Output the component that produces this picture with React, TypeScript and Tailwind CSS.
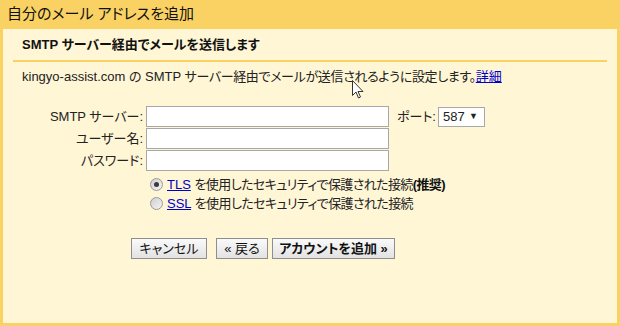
const font = "font-['Liberation_Sans','Noto_Sans_CJK_JP',sans-serif] [font-feature-settings:'palt']"

function Radio({ checked }: { checked?: boolean }) {
  return (
    <span className="flex h-[13px] w-[13px] items-center justify-center rounded-full border border-[#9a9a9a] bg-[linear-gradient(135deg,#cfcfcf,#f4f4f4)]">
      {checked && <span className="h-[5px] w-[5px] rounded-full bg-[#3a3a3a]" />}
    </span>
  )
}

function Button({ children, className = "" }: { children: React.ReactNode; className?: string }) {
  return (
    <button
      className={`flex h-[21px] items-center justify-center border border-[#8e8e8e] bg-[linear-gradient(180deg,#fafafa,#e2e2e2)] text-[13px] leading-none text-[#111] ${className}`}
    >
      {children}
    </button>
  )
}

export default function App() {
  return (
    <div className={`flex h-[326px] w-[620px] flex-col bg-[#fad163] text-[#222] ${font}`}>
      <div className="flex h-[29px] items-center pl-[7px] text-[15px] text-[#111]">自分のメール アドレスを追加</div>

      <div className="relative mx-[3px] mb-[3px] flex-1 bg-[#fff6d6]">
        <div className="mx-[10px] flex h-[33px] items-center border-b-2 border-[#fad163] pl-[9px] text-[13px] font-bold text-[#111]">
          SMTP サーバー経由でメールを送信します
        </div>

        <p className="mt-[7px] pl-[19px] text-[13px] leading-[16px]">
          kingyo-assist.com の SMTP <span className="tracking-[-0.35px]">サーバー経由でメールが送信されるように設定します。</span>
          <a className="text-[#0000cc] underline" href="#">詳細</a>
        </p>

        <div className="mt-[21px] grid grid-cols-[140px_auto] items-center gap-x-[3px] gap-y-[1px] text-[13px]">
          <label className="text-right">SMTP サーバー:</label>
          <div className="flex items-center">
            <input className="h-[21px] w-[243px] border border-[#a8a8a8] bg-white outline-none" />
            <span className="ml-[8px]">ポート:</span>
            <div className="ml-[2px] flex h-[20px] w-[47px] items-center justify-between border border-[#a8a8a8] bg-white pl-[4px] pr-[6px]">
              <span>587</span>
              <span className="text-[9px]">▼</span>
            </div>
          </div>
          <label className="text-right">ユーザー名:</label>
          <input className="h-[21px] w-[243px] border border-[#a8a8a8] bg-white outline-none" />
          <label className="text-right">パスワード:</label>
          <input className="h-[21px] w-[243px] border border-[#a8a8a8] bg-white outline-none" />
        </div>

        <div className="ml-[147px] mt-[4px] flex flex-col text-[13px]">
          <div className="flex h-[19px] items-center gap-[4px]">
            <Radio checked />
            <span>
              <a className="text-[#0000cc] underline" href="#">TLS</a>{" "}
              <span className="tracking-[-0.6px]">を使用したセキュリティで保護された接続</span>
              <b className="tracking-[-0.6px] text-[#111]">(推奨)</b>
            </span>
          </div>
          <div className="flex h-[19px] items-center gap-[4px]">
            <Radio />
            <span>
              <a className="text-[#0000cc] underline" href="#">SSL</a>{" "}
              <span className="tracking-[-0.6px]">を使用したセキュリティで保護された接続</span>
            </span>
          </div>
        </div>

        <div className="ml-[128px] mt-[25px] flex">
          <Button className="w-[76px]">キャンセル</Button>
          <Button className="ml-[9px] w-[52px]">« 戻る</Button>
          <Button className="ml-[4px] w-[123px] font-bold">アカウントを追加 »</Button>
        </div>

        <svg className="absolute left-[349px] top-[51px]" width="12" height="19" viewBox="0 0 12 19">
          <path d="M0.5 0.5 L0.5 15.5 L4 12 L6.5 18 L8.5 17 L6 11.5 L11 11.5 Z" fill="#fff" stroke="#333" strokeWidth="1" />
        </svg>
      </div>
    </div>
  )
}
